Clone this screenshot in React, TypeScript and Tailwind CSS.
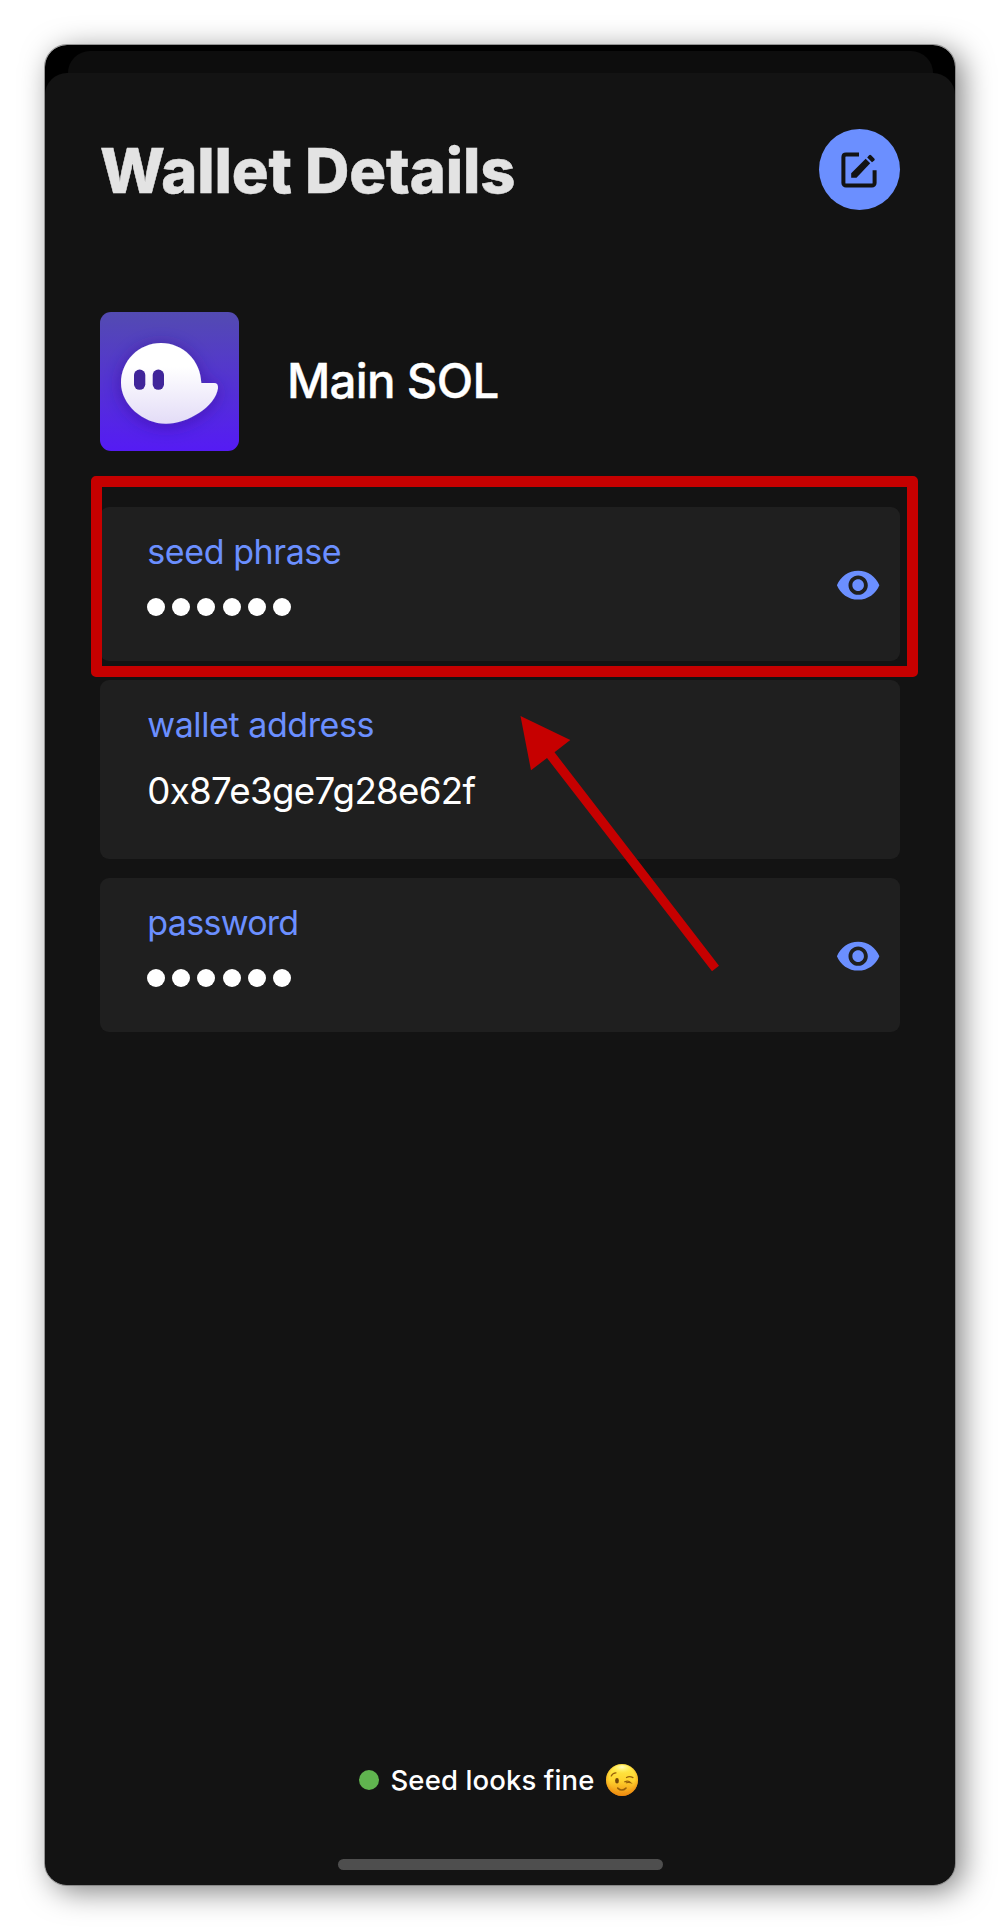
import React from "react";

function EyeIcon() {
  return (
    <svg viewBox="0 0 24 24" className="mt-px h-[46.3px] w-[46.3px] shrink-0 fill-[#6b8fff]" aria-label="Show">
      <path d="M12 4.5C7 4.5 2.73 7.61 1 12c1.73 4.39 6 7.5 11 7.5s9.27-3.11 11-7.5c-1.73-4.39-6-7.5-11-7.5zM12 17c-2.76 0-5-2.24-5-5s2.24-5 5-5 5 2.24 5 5-2.24 5-5 5zm0-8c-1.66 0-3 1.34-3 3s1.34 3 3 3 3-1.34 3-3-1.34-3-3-3z" />
    </svg>
  );
}

function EditIcon() {
  return (
    <svg viewBox="0 0 36 36" className="mr-[1.4px] h-9 w-9" aria-label="Edit">
      <path d="M18 2.5H5A2.6 2.6 0 0 0 2.4 5v26A2.6 2.6 0 0 0 5 33.6h26a2.6 2.6 0 0 0 2.6-2.6V18.2" fill="none" stroke="#131313" strokeWidth="4" />
      <path d="M10.2 21.3 24.7 6.8 29.2 11.3 15.5 25.7H10.2Z" fill="#131313" />
      <path d="M26.2 5.4 28.1 3.3Q29.1 2.3 30.1 3.3L33.3 6.5Q34.3 7.5 33.3 8.5L31 10.3Z" fill="#131313" />
    </svg>
  );
}

function WalletLogo() {
  return (
    <svg viewBox="0 0 139 139" className="h-[139px] w-[139px] shrink-0 rounded-[11px]" aria-label="Wallet logo">
      <defs>
        <linearGradient id="tile" x1="0" y1="0" x2="0" y2="1">
          <stop offset="0" stopColor="#534bb1" />
          <stop offset="1" stopColor="#551bf4" />
        </linearGradient>
        <linearGradient id="ghost" x1="0" y1="0" x2="0" y2="1">
          <stop offset="0.3" stopColor="#ffffff" />
          <stop offset="1" stopColor="#e3dcf7" />
        </linearGradient>
        <filter id="glow" x="-40%" y="-40%" width="180%" height="180%">
          <feDropShadow dx="0" dy="2" stdDeviation="9" floodColor="#301080" floodOpacity="0.5" />
        </filter>
      </defs>
      <rect width="139" height="139" fill="url(#tile)" />
      <path
        d="M61 31C83 31 101 48.8 101.3 71H114C117 71 118.3 72.9 118 76.3C115.5 94.3 88 111.8 66 111.8C43 111.8 21 92.3 21 71C21 48.8 39 31 61 31Z"
        fill="url(#ghost)"
        filter="url(#glow)"
      />
      <rect x="34" y="57.5" width="11.3" height="20.3" rx="5.6" fill="#40259a" />
      <rect x="52.7" y="57.5" width="11.3" height="20.3" rx="5.6" fill="#40259a" />
    </svg>
  );
}

function WinkFace() {
  return (
    <svg viewBox="0 0 32 32" className="h-8 w-8" aria-label="Winking face">
      <defs>
        <linearGradient id="face" x1="0" y1="0" x2="0" y2="1">
          <stop offset="0" stopColor="#fff04e" />
          <stop offset="0.5" stopColor="#ffd52f" />
          <stop offset="1" stopColor="#ef8d11" />
        </linearGradient>
        <radialGradient id="rim" cx="0.5" cy="0.45" r="0.56">
          <stop offset="0.7" stopColor="#f39a16" stopOpacity="0" />
          <stop offset="1" stopColor="#ec850d" stopOpacity="0.75" />
        </radialGradient>
        <radialGradient id="shine" cx="0.5" cy="0.15" r="0.45">
          <stop offset="0" stopColor="#fffbc9" stopOpacity="0.95" />
          <stop offset="1" stopColor="#fff45c" stopOpacity="0" />
        </radialGradient>
      </defs>
      <circle cx="16" cy="16" r="16" fill="url(#face)" />
      <circle cx="16" cy="16" r="16" fill="url(#rim)" />
      <ellipse cx="16" cy="8" rx="12" ry="7" fill="url(#shine)" />
      <ellipse cx="11" cy="16.7" rx="1.9" ry="2.7" fill="#754708" />
      <g fill="none" stroke="#98600b" strokeWidth="1.2" strokeLinecap="round">
        <path d="M5.2 12Q6.8 8.7 10 8.8" />
        <path d="M20.5 13.5Q23.5 11.8 27 13.6" />
        <path d="M18.7 17.8Q22.5 16.2 24.8 18.8Q22.5 18.1 20.3 18.8" />
        <path d="M11.7 24.1Q15.8 28 20 24.1" strokeWidth="1.5" />
      </g>
    </svg>
  );
}

function MaskedValue() {
  return (
    <div className="mt-[26.5px] flex gap-[7.1px]" aria-label="Hidden value">
      {[0, 1, 2, 3, 4, 5].map((n) => (
        <span key={n} className="h-[18px] w-[18px] rounded-full bg-white" />
      ))}
    </div>
  );
}

function SecretCard({ label, labelClass }: { label: string; labelClass: string }) {
  return (
    <div className="flex h-[154px] items-center justify-between rounded-[9px] bg-[#1f1f1f] pt-px pr-[18.9px] pl-[47.3px]">
      <div className="h-full pt-[25px]">
        <div className={labelClass}>{label}</div>
        <MaskedValue />
      </div>
      <EyeIcon />
    </div>
  );
}

export default function App() {
  return (
    <div className="h-[1930px] w-[1000px] bg-white p-[45px] font-['Inter',sans-serif] text-white">
      <main className="h-[1840px] w-[910px] rounded-[22px] bg-black pt-[6px] shadow-[7px_6px_30px_rgba(0,0,0,0.5)] outline-1 outline-[#777]/70">
        <div className="mx-[22.5px] h-[22px] rounded-t-[22px] bg-[#0d0d0d]" />
        <section className="flex h-[1812px] flex-col rounded-[22px] bg-[#131313] px-[55px]">
          <header className="mt-[56px] flex h-[81px] items-center justify-between">
            <h1 className="pt-[2px] text-[61.4px] leading-[80px] font-extrabold tracking-[-0.12px] whitespace-nowrap text-[#e3e3e3] [-webkit-text-stroke:0.5px_#e3e3e3]">Wallet Details</h1>
            <button className="flex h-[81px] w-[81px] items-center justify-center rounded-full bg-[#6b8fff]">
              <EditIcon />
            </button>
          </header>
          <div className="mt-[102px] flex h-[139px] items-center">
            <WalletLogo />
            <h2 className="ml-[48px] pb-[2px] text-[47.5px] leading-[60px] font-medium tracking-[-0.75px] whitespace-nowrap [-webkit-text-stroke:0.4px_white]">Main SOL</h2>
          </div>
          <div className="relative mt-[56px] flex flex-col gap-[19px]">
            <SecretCard label="seed phrase" labelClass="w-max text-[34px] leading-[38px] tracking-[-0.42px] text-[#6b8fff]" />
            <div className="h-[179px] rounded-[9px] bg-[#1f1f1f] pt-[26px] pl-[47.3px]">
              <div className="w-max text-[34px] leading-[38px] tracking-[-0.42px] text-[#6b8fff]">wallet address</div>
              <div className="mt-[25px] w-max text-[36.7px] leading-[44px] tracking-[-0.7px]">0x87e3ge7g28e62f</div>
            </div>
            <SecretCard label="password" labelClass="w-max text-[34px] leading-[38px] tracking-[-0.7px] text-[#6b8fff]" />
            <div className="absolute -top-[31px] -left-[9px] h-[201px] w-[827px] rounded-[5px] border-[11px] border-[#c60000]" />
            <svg viewBox="0 0 199 256" className="absolute top-[209px] left-[420px] h-[256px] w-[199px]">
              <path d="M.5 0 50.3 24 34.5 36.3 199 249.7 192 255.3 27 42 11 54.3Z" fill="#c60000" />
            </svg>
          </div>
          <footer className="mt-auto flex flex-col items-center pb-[15px]">
            <div className="mr-[3px] flex h-8 items-center">
              <span className="h-5 w-5 rounded-full bg-[#60b44f]" />
              <span className="ml-[11px] text-[27.5px] leading-8 font-medium tracking-[0.12px] whitespace-nowrap">Seed looks fine</span>
              <span className="ml-[11px]"><WinkFace /></span>
            </div>
            <div className="mt-[63px] h-[11px] w-[325px] rounded-full bg-[#4e4e4e]" />
          </footer>
        </section>
      </main>
    </div>
  );
}
